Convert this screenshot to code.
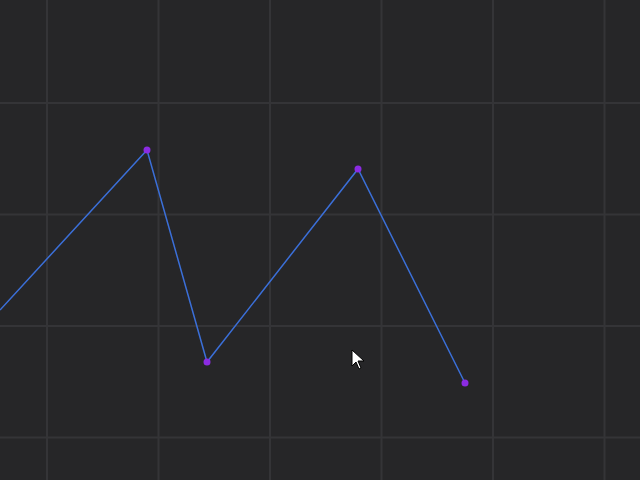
export default function App() {
  const xs = [47, 158.5, 270, 381.5, 493, 604.5];
  const ys = [103, 214.5, 326, 437.5];
  const pts = [[0, 310], [147, 150], [207, 362], [358, 169], [465, 383]];
  return (
    <div className="w-[640px] h-[480px] bg-[#262628] overflow-hidden">
      <svg width="640" height="480" className="block">
        {xs.map((x) => (
          <line key={'x' + x} x1={x} y1="0" x2={x} y2="480" stroke="#343437" strokeWidth="2" />
        ))}
        {ys.map((y) => (
          <line key={'y' + y} x1="0" y1={y} x2="640" y2={y} stroke="#343437" strokeWidth="2" />
        ))}
        <polyline points={pts.map((p) => p.join(',')).join(' ')} fill="none" stroke="#3b6fd8" strokeWidth="1.5" />
        {pts.slice(1).map(([x, y]) => (
          <circle key={x} cx={x} cy={y} r="3.5" fill="#8b2be2" />
        ))}
        <path d="M352 350 L352 366 L356 362 L359 369 L361 368 L358 361 L364 361 Z" fill="#fff" stroke="#000" strokeWidth="1" />
      </svg>
    </div>
  );
}
